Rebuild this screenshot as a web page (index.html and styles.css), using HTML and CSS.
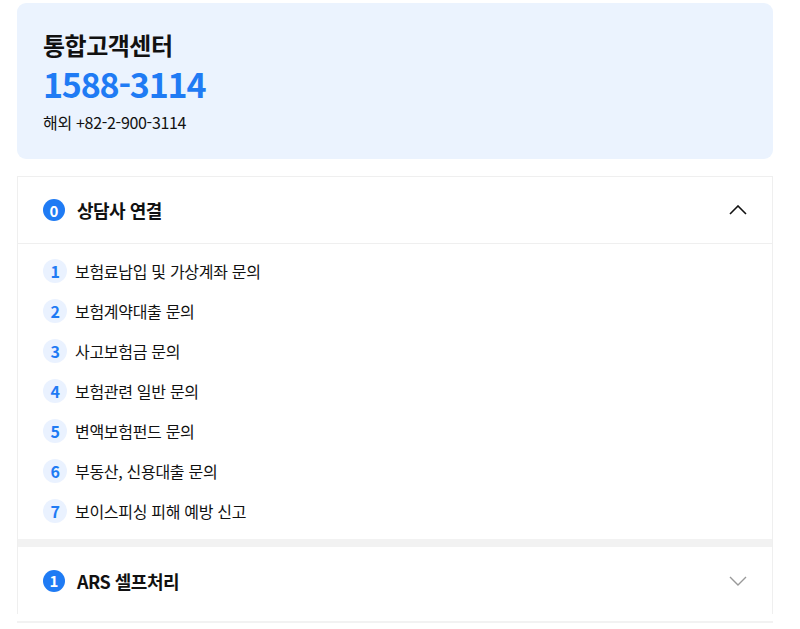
FILE: index.html
```html
<!DOCTYPE html>
<html lang="ko">
<head>
  <meta charset="UTF-8" />
  <meta name="viewport" content="width=device-width, initial-scale=1.0" />
  <title>통합고객센터</title>
  <link rel="stylesheet" href="styles.css">
</head>
<body>
  <div class="wrap">
    <div class="center-card">
      <div class="center-title">통합고객센터</div>
      <div class="center-phone">1588-3114</div>
      <div class="center-sub">해외 +82-2-900-3114</div>
    </div>

    <div class="acc">
      <div class="acc-head">
        <span class="acc-num">0</span>
        <span class="acc-title">상담사 연결</span>
        <svg class="chev" width="18" height="10" viewBox="0 0 18 10">
          <polyline points="1,9 9,1 17,9" fill="none" stroke="#111" stroke-width="1.6" />
        </svg>
      </div>
      <ul class="acc-list">
        <li><span class="item-num">1</span>보험료납입 및 가상계좌 문의</li>
        <li><span class="item-num">2</span>보험계약대출 문의</li>
        <li><span class="item-num">3</span>사고보험금 문의</li>
        <li><span class="item-num">4</span>보험관련 일반 문의</li>
        <li><span class="item-num">5</span>변액보험펀드 문의</li>
        <li><span class="item-num">6</span>부동산, 신용대출 문의</li>
        <li><span class="item-num">7</span>보이스피싱 피해 예방 신고</li>
      </ul>
      <div class="acc-gap"></div>
      <div class="acc-head last">
        <span class="acc-num">1</span>
        <span class="acc-title">ARS 셀프처리</span>
        <svg class="chev" width="18" height="10" viewBox="0 0 18 10">
          <polyline points="1,1 9,9 17,1" fill="none" stroke="#999" stroke-width="1.4" />
        </svg>
      </div>
    </div>
    <div class="acc-end"></div>
  </div>
</body>
</html>
```

FILE: styles.css
```css
:root {
  --blue: #1f7bf4;
  --light-blue: #ebf3fe;
  --line: #efefef;
  --text: #111;
}

body {
  margin: 0;
  font-family: "Noto Sans CJK KR", "Noto Sans", sans-serif;
  color: var(--text);
  background: #fff;
}

.wrap {
  padding: 3px 27px 0 17px;
}

.center-card {
  background: var(--light-blue);
  border-radius: 9px;
  padding: 28px 26px 0;
  height: 128px;
}
.center-title {
  font-size: 24px;
  font-weight: bold;
  line-height: 28px;
  letter-spacing: -0.5px;
}
.center-phone {
  font-size: 34px;
  font-weight: bold;
  color: var(--blue);
  line-height: 40px;
  margin-top: 5px;
  letter-spacing: -1.2px;
}
.center-sub {
  font-size: 16px;
  line-height: 24px;
  margin-top: 6px;
  letter-spacing: -0.3px;
}

.acc {
  margin-top: 17px;
  border: 1px solid var(--line);
  border-bottom: none;
}

.acc-head {
  display: flex;
  align-items: center;
  height: 66px;
  padding: 0 25px;
  border-bottom: 1px solid var(--line);
}
.acc-head.last {
  border-bottom: none;
  height: 67px;
}
.acc-num {
  width: 22px;
  height: 22px;
  border-radius: 50%;
  background: var(--blue);
  color: #fff;
  font-size: 15px;
  font-weight: bold;
  display: flex;
  align-items: center;
  justify-content: center;
  margin-right: 12px;
}
.acc-title {
  font-size: 18px;
  font-weight: bold;
  letter-spacing: -0.5px;
  flex: 1;
}

.acc-list {
  list-style: none;
  margin: 0;
  padding: 7px 25px 8px;
}
.acc-list li {
  display: flex;
  align-items: center;
  height: 40px;
  font-size: 16px;
  letter-spacing: -0.3px;
}
.item-num {
  width: 24px;
  height: 24px;
  border-radius: 50%;
  background: #eaf2ff;
  color: var(--blue);
  font-size: 16px;
  font-weight: bold;
  display: flex;
  align-items: center;
  justify-content: center;
  margin-right: 8px;
}

.acc-gap {
  height: 8px;
  background: #f2f2f2;
}

.acc-end {
  margin-top: 7px;
  height: 2px;
  background: #f2f2f2;
}
```
